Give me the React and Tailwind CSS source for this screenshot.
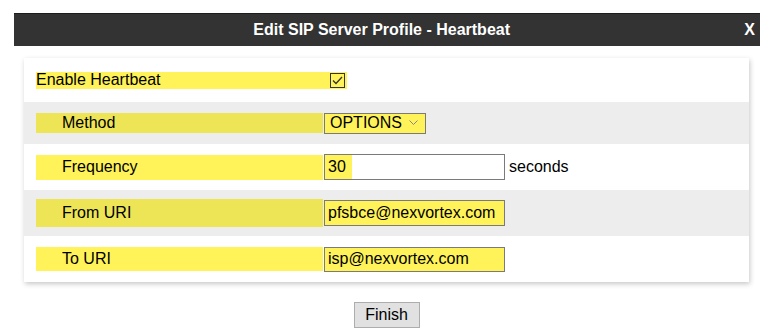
const YELLOW = "bg-[#fff359]";

const Checkbox = () => (
  <div className="w-[15px] h-[15px] border border-[#333] flex items-center justify-center">
    <svg width="11" height="9" viewBox="0 0 11 9" fill="none">
      <polyline points="1,4.5 4,7.5 10,1" stroke="#333" strokeWidth="1.3" />
    </svg>
  </div>
);

const Label = ({ text, gray, h }) => (
  <div
    className={`w-[287px] flex items-center pl-[26px] ${gray ? "bg-[#ede556]" : YELLOW} ${h}`}
  >
    {text}
  </div>
);

export default function App() {
  return (
    <div className="w-[773px] h-[332px] bg-white overflow-hidden text-[16px] text-black font-['Liberation_Sans',Arial,sans-serif]">
      <div className="h-[13px]" />

      {/* title bar */}
      <div className="ml-[14px] w-[746px] h-[33px] bg-[#333333] border-t border-[#1c1c1c] flex items-center text-white font-bold">
        <div className="flex-1 text-center pl-[5px]">Edit SIP Server Profile - Heartbeat</div>
        <span className="pr-[5px]">X</span>
      </div>

      {/* card */}
      <div className="ml-[24px] mt-[12px] w-[725px] bg-white shadow-[1px_2px_5px_rgba(0,0,0,0.22)]">
        {/* Enable Heartbeat */}
        <div className="h-[44px] flex items-center pl-[12px]">
          <div className={`w-[311px] h-[17px] flex items-center justify-between pr-[2px] ${YELLOW}`}>
            <span>Enable Heartbeat</span>
            <Checkbox />
          </div>
        </div>

        {/* Method */}
        <div className="h-[42px] flex items-center pl-[12px] bg-[#ededed]">
          <Label text="Method" gray h="h-[20px]" />
          <div className={`ml-[1px] w-[102px] h-[21px] border border-[#7a7a7a] flex items-center justify-between pl-[5px] pr-[7px] ${YELLOW}`}>
            <span>OPTIONS</span>
            <svg width="9" height="6" viewBox="0 0 9 6" fill="none">
              <polyline points="0.5,0.5 4.5,4.5 8.5,0.5" stroke="#888" strokeWidth="1" />
            </svg>
          </div>
        </div>

        {/* Frequency */}
        <div className="h-[46px] flex items-center pl-[12px]">
          <Label text="Frequency" h="h-[25px]" />
          <div className="ml-[1px] w-[181px] h-[26px] border border-[#7a7a7a] bg-white flex">
            <span className={`h-full flex items-center pl-[3px] pr-[6px] ${YELLOW}`}>30</span>
          </div>
          <span className="ml-[4px]">seconds</span>
        </div>

        {/* From URI */}
        <div className="h-[46px] flex items-center pl-[12px] bg-[#ededed]">
          <Label text="From URI" gray h="h-[28px]" />
          <div className={`ml-[1px] w-[181px] h-[26px] border border-[#7a7a7a] flex items-center pl-[3px] ${YELLOW}`}>
            pfsbce@nexvortex.com
          </div>
        </div>

        {/* To URI */}
        <div className="h-[46px] flex items-center pl-[12px]">
          <Label text="To URI" h="h-[24px]" />
          <div className={`ml-[1px] w-[181px] h-[25px] border border-[#7a7a7a] flex items-center pl-[3px] ${YELLOW}`}>
            isp@nexvortex.com
          </div>
        </div>
      </div>

      <div className="mt-[20px] flex justify-center">
        <button className="w-[66px] h-[26px] bg-[#e1e1e1] border border-[#adadad] text-black">
          Finish
        </button>
      </div>
    </div>
  );
}
